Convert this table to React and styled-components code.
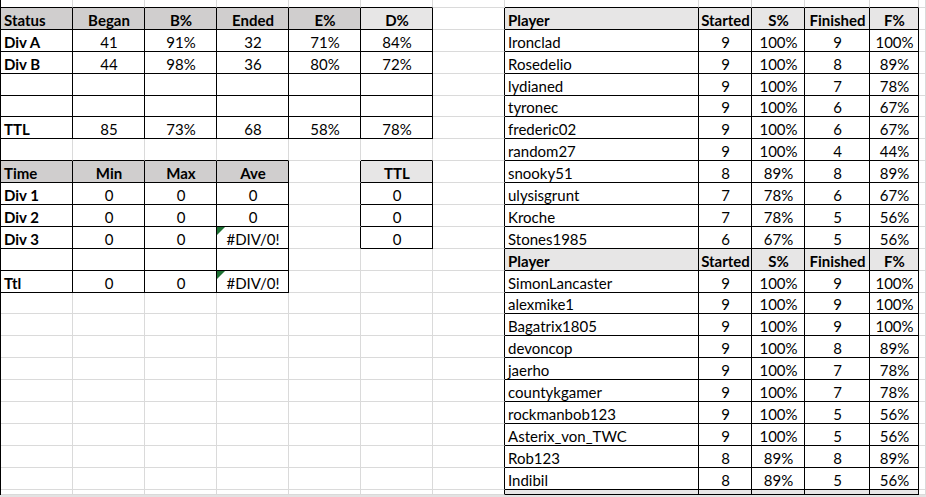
import React from "react";
import styled, { createGlobalStyle, css } from "styled-components";

const GlobalStyle = createGlobalStyle`
  html, body {
    margin: 0;
    padding: 0;
    background: #fff;
    overflow: hidden;
  }
  body {
    font-family: Lato, "Open Sans", "Liberation Sans", sans-serif;
  }
`;

const fills = {
  dark: "#d0cece",
  light: "#e7e6e6",
};

const Page = styled.div`
  display: flex;
  flex-direction: column;
  width: 926px;
  height: 497px;
  overflow: hidden;
`;

const Sheet = styled.div`
  flex: 1;
  display: grid;
  grid-template-columns: repeat(7, 72px) 194px 53px 53px 65px 49px 1fr;
  grid-template-rows: 8px repeat(22, 21.9px) 1fr;
  border-left: 1px solid #000;
  overflow: hidden;
`;

const ScrollEdge = styled.div`
  height: 2px;
  background: #e3e3e3;
`;

const Cell = styled.div`
  position: relative;
  display: flex;
  align-items: flex-end;
  justify-content: ${p => (p.$left ? "flex-start" : "center")};
  min-width: 0;
  padding: 0 2px 0 3px;
  overflow: hidden;
  white-space: nowrap;
  background: ${p => fills[p.$fill] || "#fff"};
  border-right: 1px solid ${p => (p.$edgeR ? "#000" : "#dadada")};
  border-bottom: 1px solid ${p => (p.$edgeB ? "#000" : "#dadada")};
  font-size: 15px;
  line-height: 17px;
  font-weight: ${p => (p.$bold ? 700 : 400)};
  color: #000;

  ${p =>
    p.$error &&
    css`
      &::before {
        content: "";
        position: absolute;
        top: 0;
        left: 0;
        width: 0;
        height: 0;
        border-top: 8px solid #1e7134;
        border-right: 8px solid transparent;
      }
    `}
`;

const blank = n => Array.from({ length: n }, () => "");

const players = [
  ["Ironclad", "9", "100%", "9", "100%"],
  ["Rosedelio", "9", "100%", "8", "89%"],
  ["lydianed", "9", "100%", "7", "78%"],
  ["tyronec", "9", "100%", "6", "67%"],
  ["frederic02", "9", "100%", "6", "67%"],
  ["random27", "9", "100%", "4", "44%"],
  ["snooky51", "8", "89%", "8", "89%"],
  ["ulysisgrunt", "7", "78%", "6", "67%"],
  ["Kroche", "7", "78%", "5", "56%"],
  ["Stones1985", "6", "67%", "5", "56%"],
];

const morePlayers = [
  ["SimonLancaster", "9", "100%", "9", "100%"],
  ["alexmike1", "9", "100%", "9", "100%"],
  ["Bagatrix1805", "9", "100%", "9", "100%"],
  ["devoncop", "9", "100%", "8", "89%"],
  ["jaerho", "9", "100%", "7", "78%"],
  ["countykgamer", "9", "100%", "7", "78%"],
  ["rockmanbob123", "9", "100%", "5", "56%"],
  ["Asterix_von_TWC", "9", "100%", "5", "56%"],
  ["Rob123", "8", "89%", "8", "89%"],
  ["Indibil", "8", "89%", "5", "56%"],
];

const playerHead = ["Player", "Started", "S%", "Finished", "F%"];

const tables = [
  {
    top: 1,
    left: 0,
    labels: true,
    heads: [0],
    headFill: ["dark", "dark", "dark", "dark", "dark", "light"],
    rows: [
      ["Status", "Began", "B%", "Ended", "E%", "D%"],
      ["Div A", "41", "91%", "32", "71%", "84%"],
      ["Div B", "44", "98%", "36", "80%", "72%"],
      blank(6),
      blank(6),
      ["TTL", "85", "73%", "68", "58%", "78%"],
    ],
  },
  {
    top: 8,
    left: 0,
    labels: true,
    heads: [0],
    headFill: ["dark", "dark", "dark", "dark"],
    rows: [
      ["Time", "Min", "Max", "Ave"],
      ["Div 1", "0", "0", "0"],
      ["Div 2", "0", "0", "0"],
      ["Div 3", "0", "0", "#DIV/0!"],
      blank(4),
      ["Ttl", "0", "0", "#DIV/0!"],
    ],
  },
  {
    top: 8,
    left: 5,
    labels: false,
    heads: [0],
    headFill: ["light"],
    rows: [["TTL"], ["0"], ["0"], ["0"]],
  },
  {
    top: 1,
    left: 7,
    labels: true,
    boldLabels: false,
    heads: [0, 11, 22],
    headFill: ["light", "light", "light", "light", "light"],
    rows: [playerHead, ...players, playerHead, ...morePlayers, blank(5)],
  },
];

const ROWS = 24;
const COLS = 13;

const grid = Array.from({ length: ROWS }, () =>
  Array.from({ length: COLS }, () => null)
);

tables.forEach(t =>
  t.rows.forEach((row, i) =>
    row.forEach((text, j) => {
      const head = t.heads.includes(i);
      const label = t.labels && j === 0;
      grid[t.top + i][t.left + j] = {
        text,
        fill: head ? t.headFill[j] : null,
        bold: head || (label && t.boldLabels !== false),
        left: label,
        error: text.startsWith("#"),
      };
    })
  )
);

const boxed = (r, c) => r < ROWS && c < COLS && grid[r][c] !== null;

const App = () => (
  <>
    <GlobalStyle />
    <Page>
      <Sheet>
        {grid.map((row, r) =>
          row.map((cell, c) => (
            <Cell
              key={`${r}-${c}`}
              $edgeR={boxed(r, c) || boxed(r, c + 1)}
              $edgeB={boxed(r, c) || boxed(r + 1, c)}
              $fill={cell && cell.fill}
              $bold={cell && cell.bold}
              $left={cell && cell.left}
              $error={cell && cell.error}
            >
              {cell && cell.text}
            </Cell>
          ))
        )}
      </Sheet>
      <ScrollEdge />
    </Page>
  </>
);

export default App;
